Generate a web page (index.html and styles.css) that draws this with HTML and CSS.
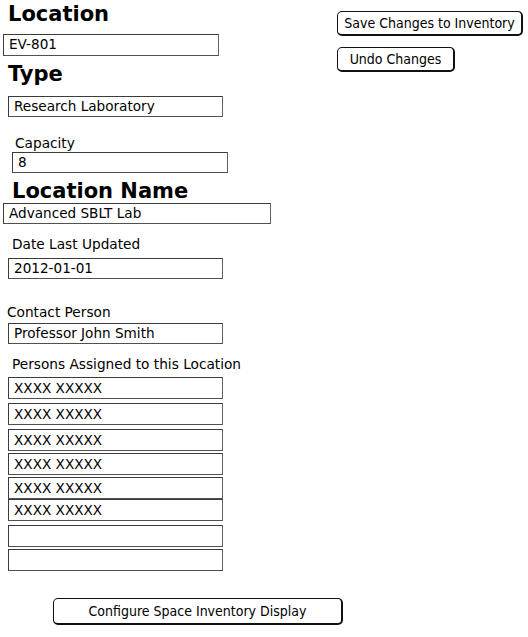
FILE: index.html
```html
<!DOCTYPE html>
<html lang="en">
<head>
<meta charset="utf-8">
<title>Location</title>
<link rel="stylesheet" href="styles.css">
</head>
<body>
<div class="page">
  <div class="form">
    <h1 class="heading h-location">Location</h1>
    <div class="field f-location">EV-801</div>
    <h1 class="heading h-type">Type</h1>
    <div class="field f-type">Research Laboratory</div>
    <div class="label l-capacity">Capacity</div>
    <div class="field f-capacity">8</div>
    <h1 class="heading h-name">Location Name</h1>
    <div class="field f-name">Advanced SBLT Lab</div>
    <div class="label l-date">Date Last Updated</div>
    <div class="field f-date">2012-01-01</div>
    <div class="label l-contact">Contact Person</div>
    <div class="field f-contact">Professor John Smith</div>
    <div class="label l-persons">Persons Assigned to this Location</div>
    <div class="persons">
      <div class="field person p1">XXXX XXXXX</div>
      <div class="field person p2">XXXX XXXXX</div>
      <div class="field person p3">XXXX XXXXX</div>
      <div class="field person p4">XXXX XXXXX</div>
      <div class="field person p5">XXXX XXXXX</div>
      <div class="field person p6">XXXX XXXXX</div>
      <div class="field person p7"></div>
      <div class="field person p8"></div>
    </div>
    <button class="sketch-btn btn-configure" type="button">Configure Space Inventory Display</button>
  </div>
  <div class="actions">
    <button class="sketch-btn btn-save" type="button">Save Changes to Inventory</button>
    <button class="sketch-btn btn-undo" type="button">Undo Changes</button>
  </div>
</div>
</body>
</html>
```

FILE: styles.css
```css
html, body {
  margin: 0;
  padding: 0;
  background: #fff;
}

body {
  font-family: "DejaVu Sans", "Liberation Sans", sans-serif;
  color: #000;
}

.page {
  display: flex;
  align-items: flex-start;
}

.form {
  flex: 0 0 337px;
  min-width: 0;
  display: flex;
  flex-direction: column;
  align-items: flex-start;
}

.heading {
  margin: 0;
  font-size: 21px;
  line-height: 24px;
  font-weight: bold;
  white-space: nowrap;
}

.label {
  font-size: 13.7px;
  line-height: 16px;
  white-space: nowrap;
}

.field {
  box-sizing: border-box;
  height: 21px;
  border: 1px solid #3c3c3c;
  border-right-color: #606060;
  border-bottom-color: #505050;
  padding: 0 5px;
  font-size: 13.6px;
  line-height: 19px;
  white-space: nowrap;
  background: #fff;
}

.h-location { margin-top: 2px; margin-left: 8px; }
.f-location { margin-top: 8px; margin-left: 3px; width: 216px; height: 22px; }
.h-type { margin-top: 6px; margin-left: 8px; }
.f-type { margin-top: 10px; margin-left: 8px; width: 215px; }
.l-capacity { margin-top: 18px; margin-left: 15px; }
.f-capacity { margin-top: 1px; margin-left: 12px; width: 216px; }
.h-name { margin-top: 6px; margin-left: 12px; }
.f-name { margin-top: 0; margin-left: 3px; width: 268px; }
.l-date { margin-top: 12px; margin-left: 12px; }
.f-date { margin-top: 6px; margin-left: 8px; width: 215px; }
.l-contact { margin-top: 25px; margin-left: 7px; }
.f-contact { margin-top: 3px; margin-left: 8px; width: 215px; }
.l-persons { margin-top: 12px; margin-left: 12px; }

.persons {
  display: flex;
  flex-direction: column;
  margin-left: 8px;
}

.person {
  width: 215px;
  height: 22px;
  line-height: 20px;
}

.p1 { margin-top: 5px; }
.p2 { margin-top: 4px; }
.p3 { margin-top: 4px; }
.p4 { margin-top: 2px; }
.p5 { margin-top: 2px; }
.p6 { margin-top: 0; }
.p7 { margin-top: 4px; }
.p8 { margin-top: 2px; }

.sketch-btn {
  box-sizing: border-box;
  margin: 0;
  padding: 0;
  background: #fff;
  color: #000;
  border-style: solid;
  border-color: #111;
  border-width: 1.5px 2.5px 2.5px 1.5px;
  border-radius: 5px;
  font-family: "DejaVu Sans Condensed", "DejaVu Sans", sans-serif;
  font-size: 14px;
  line-height: 20px;
  text-align: center;
  white-space: nowrap;
}

.btn-configure {
  margin-top: 27px;
  margin-left: 53px;
  width: 290px;
  height: 27px;
}

.actions {
  display: flex;
  flex-direction: column;
  align-items: flex-start;
  gap: 11px;
  padding-top: 11px;
}

.btn-save {
  width: 186px;
  height: 25px;
}

.btn-undo {
  width: 118px;
  height: 25px;
}
```
